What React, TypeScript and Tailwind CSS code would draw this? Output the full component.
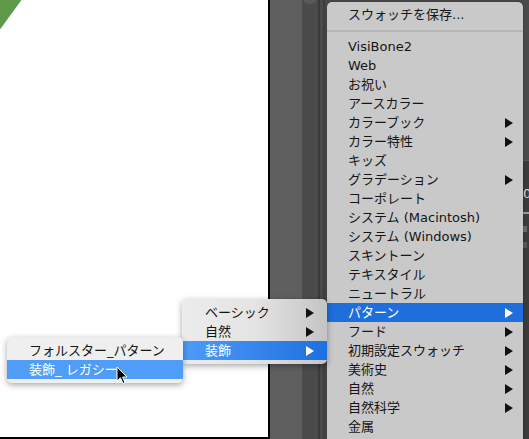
import React from 'react';

const FONT = '"DejaVu Sans", "Noto Sans CJK JP", sans-serif';

type Item = { label: string; sub?: boolean; active?: boolean };

const mainItems: Item[] = [
  { label: 'VisiBone2' },
  { label: 'Web' },
  { label: 'お祝い' },
  { label: 'アースカラー' },
  { label: 'カラーブック', sub: true },
  { label: 'カラー特性', sub: true },
  { label: 'キッズ' },
  { label: 'グラデーション', sub: true },
  { label: 'コーポレート' },
  { label: 'システム (Macintosh)' },
  { label: 'システム (Windows)' },
  { label: 'スキントーン' },
  { label: 'テキスタイル' },
  { label: 'ニュートラル' },
  { label: 'パターン', sub: true, active: true },
  { label: 'フード', sub: true },
  { label: '初期設定スウォッチ', sub: true },
  { label: '美術史', sub: true },
  { label: '自然', sub: true },
  { label: '自然科学', sub: true },
  { label: '金属' },
];

const Arrow = ({ white }: { white?: boolean }) => (
  <svg width="8" height="10" viewBox="0 0 8 10" className="shrink-0">
    <path d="M0 0 L8 5 L0 10 Z" fill={white ? '#ffffff' : '#111111'} />
  </svg>
);

const Row = ({ item, activeClass, pl, pr }: { item: Item; activeClass: string; pl: string; pr: string }) => (
  <div
    className={`h-[19px] flex items-center justify-between ${pl} ${pr} ${
      item.active ? `${activeClass} text-white` : 'text-[#151515]'
    }`}
  >
    <span className="whitespace-nowrap leading-none">{item.label}</span>
    {item.sub && <Arrow white={item.active} />}
  </div>
);

const Cursor = () => (
  <svg width="12" height="19" viewBox="0 0 12 19" className="absolute left-[116px] top-[366px]">
    <path
      d="M1 1 L1 15 L4.5 11.8 L7 17.5 L9 16.6 L6.6 11 L11 11 Z"
      fill="#000000"
      stroke="#ffffff"
      strokeWidth="1"
      strokeLinejoin="round"
    />
  </svg>
);

export default function App() {
  return (
    <div
      className="relative w-[529px] h-[439px] overflow-hidden flex bg-[#5f5f5f] text-[13px]"
      style={{ fontFamily: FONT }}
    >
      {/* canvas */}
      <div className="w-[270px] h-[439px] shrink-0">
        <div className="relative w-[270px] h-[439px] bg-white border-r-2 border-b-2 border-black overflow-hidden">
          <svg width="24" height="32" viewBox="0 0 24 32" className="absolute left-0 top-0">
            <path d="M0 0 L21.5 0 L0 29.5 Z" fill="#5f9a4a" />
          </svg>
        </div>
      </div>

      {/* dark panels */}
      <div className="w-[32px] h-full bg-[#5f5f5f]" />
      <div className="relative w-[16px] h-full bg-[#4b4b4b]">
        <div className="absolute left-[1px] -top-[8px] w-[14px] h-[12px] rounded-full bg-[#5a5a5a]" />
      </div>
      <div className="w-[2px] h-full bg-[#3a3a3a]" />
      <div className="w-[3px] h-full bg-[#4a4a4a]" />
      <div className="w-[2px] h-full bg-[#3d3d3d]" />
      <div className="flex-1 h-full bg-[#4a4a4a]" />

      {/* right edge fragments behind menu */}
      <div className="absolute left-[523px] top-0 w-[6px] h-full bg-[#3b3b3b] overflow-hidden">
        <div className="h-[160px] bg-[#4a4a4a]" />
        <div className="h-px bg-[#5a5a5a]" />
        <div className="pt-[26px] w-[6px] overflow-hidden text-[13px] text-[#d8d8d8] leading-none">0</div>
        <div className="mt-[12px] w-[6px] h-[2px] bg-[#9a9a9a]" />
        <div className="mt-[12px] w-[4px] h-[6px] bg-[#6a6a6a]" />
        <div className="mt-[10px] w-[4px] h-[6px] bg-[#5a5a5a]" />
      </div>

      {/* main menu */}
      <div className="absolute left-[327px] top-[2px] w-[196px] h-[460px] bg-[#c9c9c9] rounded-t-[5px] shadow-[0_0_3px_rgba(0,0,0,0.35)]">
        <div className="pt-[3px]">
          <div className="h-[19px] flex items-center pl-[21px] text-[#151515] whitespace-nowrap leading-none">
            スウォッチを保存...
          </div>
          <div className="h-[13px] flex items-center">
            <div className="w-full h-[2px] bg-[#b6b6b6]" />
          </div>
          {mainItems.map((it) => (
            <Row key={it.label} item={it} activeClass="bg-[#1e6fdb]" pl="pl-[21px]" pr="pr-[10px]" />
          ))}
        </div>
      </div>

      {/* submenu 2 */}
      <div className="absolute left-[182px] top-[299px] w-[145px] py-[4px] rounded-[5px] bg-gradient-to-r from-[#ececec] via-[#e4e4e4] to-[#c4c4c4] shadow-[0_2px_6px_rgba(0,0,0,0.35)]">
        <Row item={{ label: 'ベーシック', sub: true }} activeClass="" pl="pl-[23px]" pr="pr-[13px]" />
        <Row item={{ label: '自然', sub: true }} activeClass="" pl="pl-[23px]" pr="pr-[13px]" />
        <Row
          item={{ label: '装飾', sub: true, active: true }}
          activeClass="bg-gradient-to-r from-[#4e9bf8] to-[#1d70e0]"
          pl="pl-[23px]"
          pr="pr-[13px]"
        />
      </div>

      {/* submenu 3 */}
      <div className="absolute left-[7px] top-[337px] w-[176px] py-[4px] rounded-[5px] bg-[#efefef] shadow-[0_2px_6px_rgba(0,0,0,0.35)]">
        <Row item={{ label: 'フォルスター_パターン' }} activeClass="" pl="pl-[22px]" pr="pr-[10px]" />
        <Row item={{ label: '装飾_ レガシー', active: true }} activeClass="bg-[#4f9cf9]" pl="pl-[22px]" pr="pr-[10px]" />
      </div>

      <Cursor />
    </div>
  );
}
